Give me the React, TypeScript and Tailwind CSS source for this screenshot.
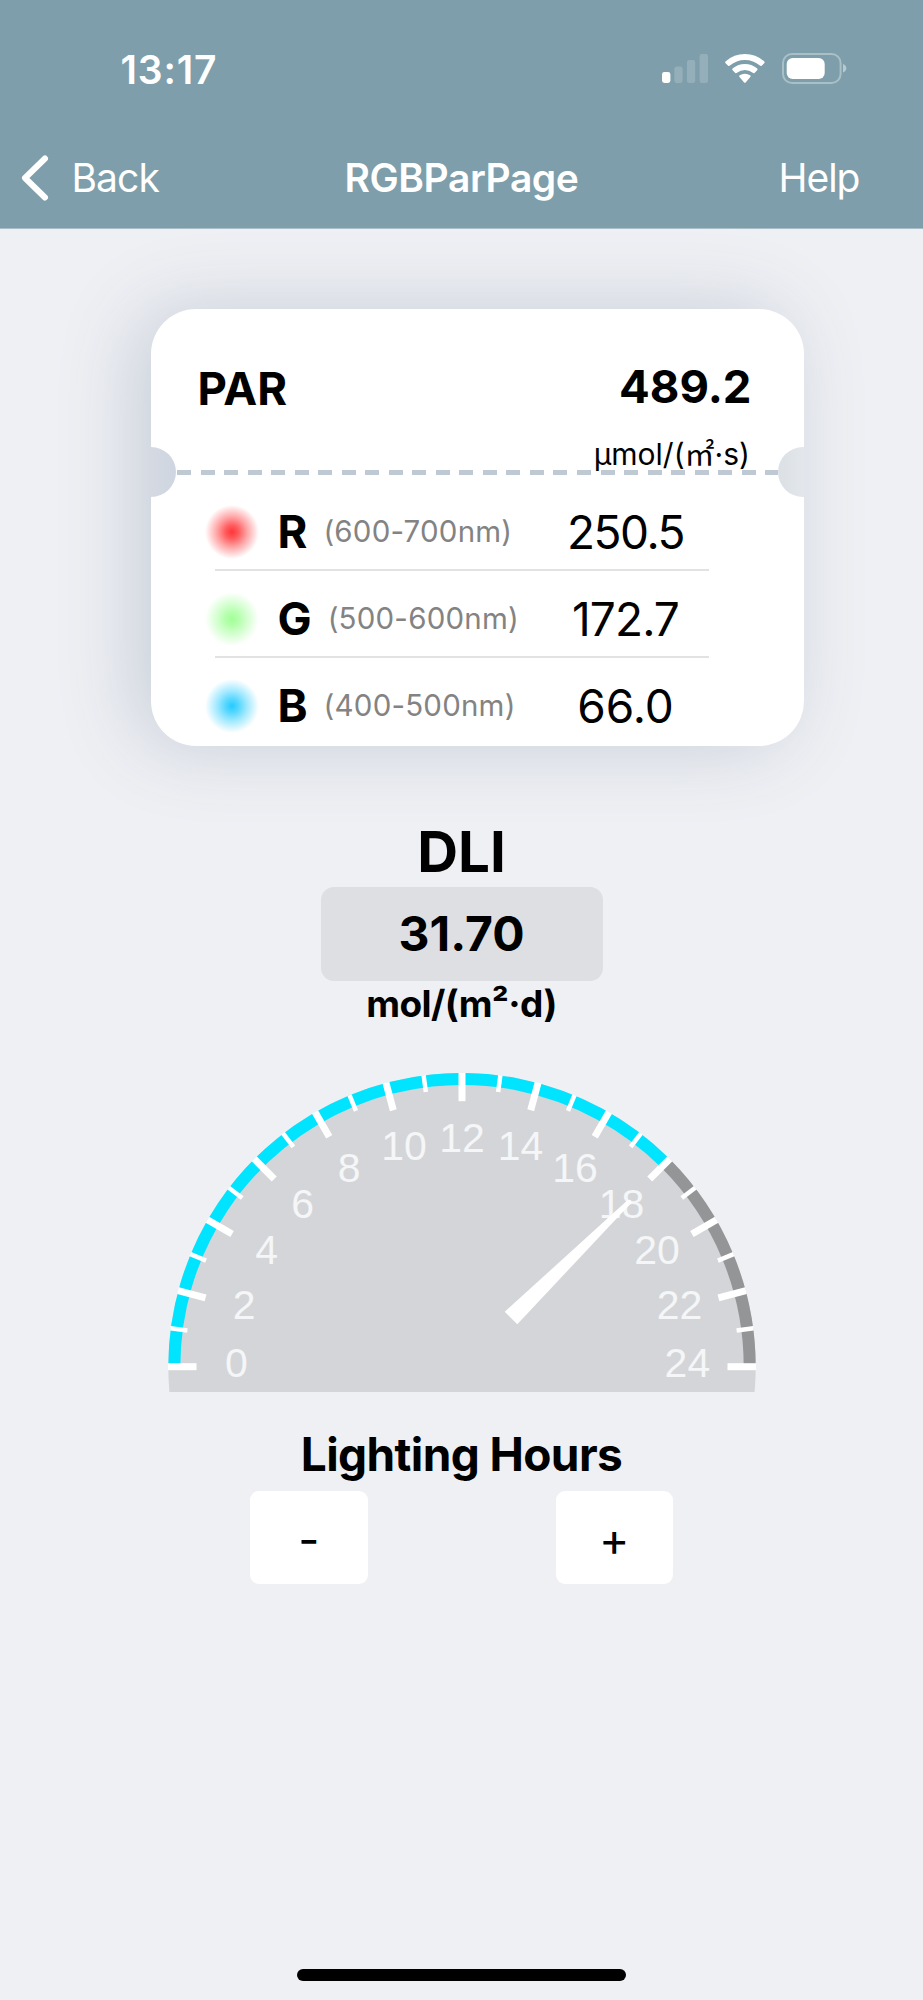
import React from "react";

const CX = 294;
const CY = 293.7;
const R = 293.7;

function point(radius: number, hour: number): [number, number] {
  const a = Math.PI - (hour / 24) * Math.PI;
  return [CX + radius * Math.cos(a), CY - radius * Math.sin(a)];
}

function arc(from: number, to: number): string {
  const r = R - 6;
  const [x1, y1] = point(r, from);
  const [x2, y2] = point(r, to);
  return `M${x1} ${y1}A${r} ${r} 0 0 1 ${x2} ${y2}`;
}

const labels: [string, number, number][] = [
  ["0", 68.4, 304.3],
  ["2", 76.2, 246],
  ["4", 98.6, 191.3],
  ["6", 134.6, 145],
  ["8", 181.1, 109.3],
  ["10", 236, 86.5],
  ["12", 294, 78.8],
  ["14", 352.5, 86.5],
  ["16", 407, 109.3],
  ["18", 453.5, 145],
  ["20", 489, 191.3],
  ["22", 511.6, 246],
  ["24", 519.4, 304.3],
];

function Gauge() {
  const hours = Array.from({ length: 25 }, (_, i) => i);
  return (
    <svg width="588" height="319" viewBox="0 0 588 319" className="block">
      <circle cx={CX} cy={CY} r={R} fill="#d4d5d8" />
      <path d={arc(18, 24)} fill="none" stroke="#949597" strokeWidth="12" />
      <path d={arc(0, 18)} fill="none" stroke="#00e4ff" strokeWidth="12" />
      {hours.map((h) => {
        const major = h % 2 === 0;
        const [x1, y1] = point(R + 0.3, h);
        const [x2, y2] = point(major ? 265.5 : 277, h);
        return <line key={h} x1={x1} y1={y1} x2={x2} y2={y2} stroke="#fff" strokeWidth={major ? 7 : 4.5} />;
      })}
      {labels.map(([t, x, y]) => (
        <text
          key={t}
          x={x}
          y={y}
          textAnchor="middle"
          className="fill-[#f5f6f7] font-['Liberation_Sans',sans-serif] text-[41px]"
        >
          {t}
        </text>
      ))}
      <path d="M336.7 238.8L459.5 127.3Q463.6 125.6 463.6 129.4L349.3 251.3Z" fill="#fff" />
    </svg>
  );
}

function StatusIcons() {
  return (
    <svg width="186" height="32" viewBox="661 53 186 32" className="block">
      <g fill="#fff">
        <rect x="662" y="72" width="8.4" height="11" rx="2.4" />
        <g opacity=".18">
          <rect x="674.4" y="66.5" width="8.2" height="16.5" rx="2.2" />
          <rect x="687" y="60" width="8.2" height="23" rx="2.2" />
          <rect x="699.6" y="54" width="8.4" height="29" rx="2.2" />
        </g>
        <path d="M725.6 63.3Q724.6 62.2 725.8 61.2Q733.9 54 744.9 54Q755.9 54 764 61.2Q765.2 62.2 764.2 63.3L761.7 65.7Q760.9 66.5 759.9 65.6Q753.5 60 744.9 60Q736.3 60 729.9 65.6Q728.9 66.5 728.1 65.7Z" />
        <path d="M732.6 70.2Q731.6 69.2 732.8 68.2Q738.1 63.9 744.9 63.9Q751.7 63.9 757 68.2Q758.2 69.2 757.2 70.2L754.5 72.9Q753.8 73.6 752.8 72.8Q749.3 70 744.9 70Q740.5 70 737 72.8Q736 73.6 735.3 72.9Z" />
        <path d="M739.5 77.1Q738.5 76.1 739.7 75.3Q742 73.8 744.9 73.8Q747.8 73.8 750.1 75.3Q751.3 76.1 750.3 77.1L745.9 82.2Q744.9 83.2 743.9 82.2Z" />
        <rect x="786.7" y="58" width="38" height="21" rx="6" />
        <path d="M843 64V72.4Q846.3 71.2 846.3 68.2Q846.3 65.2 843 64Z" opacity=".45" />
      </g>
      <rect x="783" y="54" width="57.6" height="29" rx="9" fill="none" stroke="#fff" strokeOpacity=".35" strokeWidth="2" />
    </svg>
  );
}

const bands = [
  {
    name: "R",
    range: "(600-700nm)",
    value: "250.5",
    glow: "bg-[radial-gradient(closest-side,#ff3538_0%,#ff5d5f_25%,#ffa9aa_58%,#ffffff_100%)]",
    tracking: "tracking-[-1.5px]",
  },
  {
    name: "G",
    range: "(500-600nm)",
    value: "172.7",
    glow: "bg-[radial-gradient(closest-side,#a2ff98_0%,#b4ffac_25%,#d6ffd2_58%,#ffffff_100%)]",
    tracking: "tracking-[-0.9px]",
  },
  {
    name: "B",
    range: "(400-500nm)",
    value: "66.0",
    glow: "bg-[radial-gradient(closest-side,#23cbff_0%,#57d7ff_25%,#a6eaff_58%,#ffffff_100%)]",
    tracking: "tracking-normal",
  },
];

function ParCard() {
  return (
    <section className="relative ml-[151px] mt-[79.5px] h-[437.5px] w-[652.5px] rounded-[45px] bg-white shadow-[-16px_0_80px_#c7ced8]">
      <div className="h-[161.5px] pl-[46.5px] pr-[52px] pt-[50px]">
        <div className="flex h-[60px] items-center justify-between">
          <span className="text-[45.5px] font-bold">PAR</span>
          <span className="mb-[4px] text-[45.5px] font-bold">489.2</span>
        </div>
        <div className="mt-[19px] flex h-[33px] items-center justify-end whitespace-nowrap pr-[1.5px] text-[30px]">
          <span>µmol/(</span>
          <span className="mb-[5px] font-['Noto_Sans_CJK_SC',sans-serif]">㎡</span>
          <span>·s)</span>
        </div>
      </div>
      <div className="mx-[25.5px] h-[4.5px] bg-[repeating-linear-gradient(90deg,#bfc9d3_0px,#bfc9d3_14px,transparent_14px,transparent_23.53px)]" />
      <div className="ml-[54px] mr-[95px] pt-[19.5px]">
        {bands.map((b, i) => (
          <React.Fragment key={b.name}>
            <div className="flex h-[75px] items-center whitespace-nowrap">
              <span className={`size-[54px] shrink-0 rounded-full ${b.glow}`} />
              <span className="ml-[18.5px] text-[45.5px] font-bold">{b.name}</span>
              <span className="ml-[16px] text-[29.5px] tracking-[0.2px] text-[#838383]">{b.range}</span>
              <span className={`ml-auto w-[166px] text-center text-[46px] ${b.tracking}`}>{b.value}</span>
            </div>
            {i < 2 && <div className="mb-[10px] ml-[10px] h-[2px] bg-[#e2e2e2]" />}
          </React.Fragment>
        ))}
      </div>
      <div className="absolute left-0 top-[138.2px] h-[50.6px] w-[24.5px] rounded-r-full bg-gradient-to-r from-[#d4d9e2] to-[#cfd6e1]" />
      <div className="absolute right-0 top-[138.2px] h-[50.6px] w-[25.3px] rounded-l-full bg-gradient-to-r from-[#dbe0e5] to-[#e3e7ec]" />
    </section>
  );
}

export default function App() {
  return (
    <div className="flex h-[2000px] w-[923px] flex-col overflow-hidden bg-[#eff0f4] font-['Inter',sans-serif] leading-none text-black">
      <header className="h-[229px] shrink-0 border-b border-[#a9bdc8] bg-[#7d9eaa] text-white">
        <div className="flex h-[138px] items-center justify-between pl-[120.5px] pr-[76px]">
          <span className="text-[39px] font-semibold tracking-[0.8px]">13:17</span>
          <StatusIcons />
        </div>
        <nav className="grid h-[79px] grid-cols-[1fr_auto_1fr] items-center text-[39px]">
          <div className="flex items-center">
            <svg width="30" height="48" viewBox="0 0 30 48" className="ml-[20px] block" fill="none" stroke="#fff" strokeWidth="6" strokeLinecap="round" strokeLinejoin="round">
              <path d="M25 4.5L5 24L25 43.5" />
            </svg>
            <span className="ml-[21.5px] tracking-[-0.9px]">Back</span>
          </div>
          <span className="font-semibold tracking-[-0.45px]">RGBParPage</span>
          <span className="pr-[63.5px] text-right tracking-[-1px]">Help</span>
        </nav>
      </header>
      <ParCard />
      <section className="mt-[75px] flex flex-col items-center">
        <h2 className="flex h-[65.5px] items-center pb-[4px] text-[56.5px] font-bold">DLI</h2>
        <div className="flex h-[94px] w-[282px] items-center justify-center rounded-[13px] bg-[#dedfe2] text-[48px] font-bold">31.70</div>
        <div className="mt-[3.5px] flex h-[38px] items-center text-[37px] font-bold tracking-[-0.6px]">mol/(m²·d)</div>
      </section>
      <section className="mt-[50.5px] flex flex-col items-center">
        <Gauge />
        <h2 className="mt-[38px] flex h-[48px] items-center text-[46px] font-bold tracking-[-0.6px]">Lighting Hours</h2>
        <div className="mt-[13px] flex w-[423px] justify-between text-[46px]">
          <button className="h-[93.5px] w-[117.5px] rounded-[9px] bg-white pt-[4px]">-</button>
          <button className="h-[93.5px] w-[117.5px] rounded-[9px] bg-white pt-[4px]">+</button>
        </div>
      </section>
      <div className="mb-[19px] mt-auto ml-[297px] h-[12px] w-[329px] rounded-full bg-black" />
    </div>
  );
}
